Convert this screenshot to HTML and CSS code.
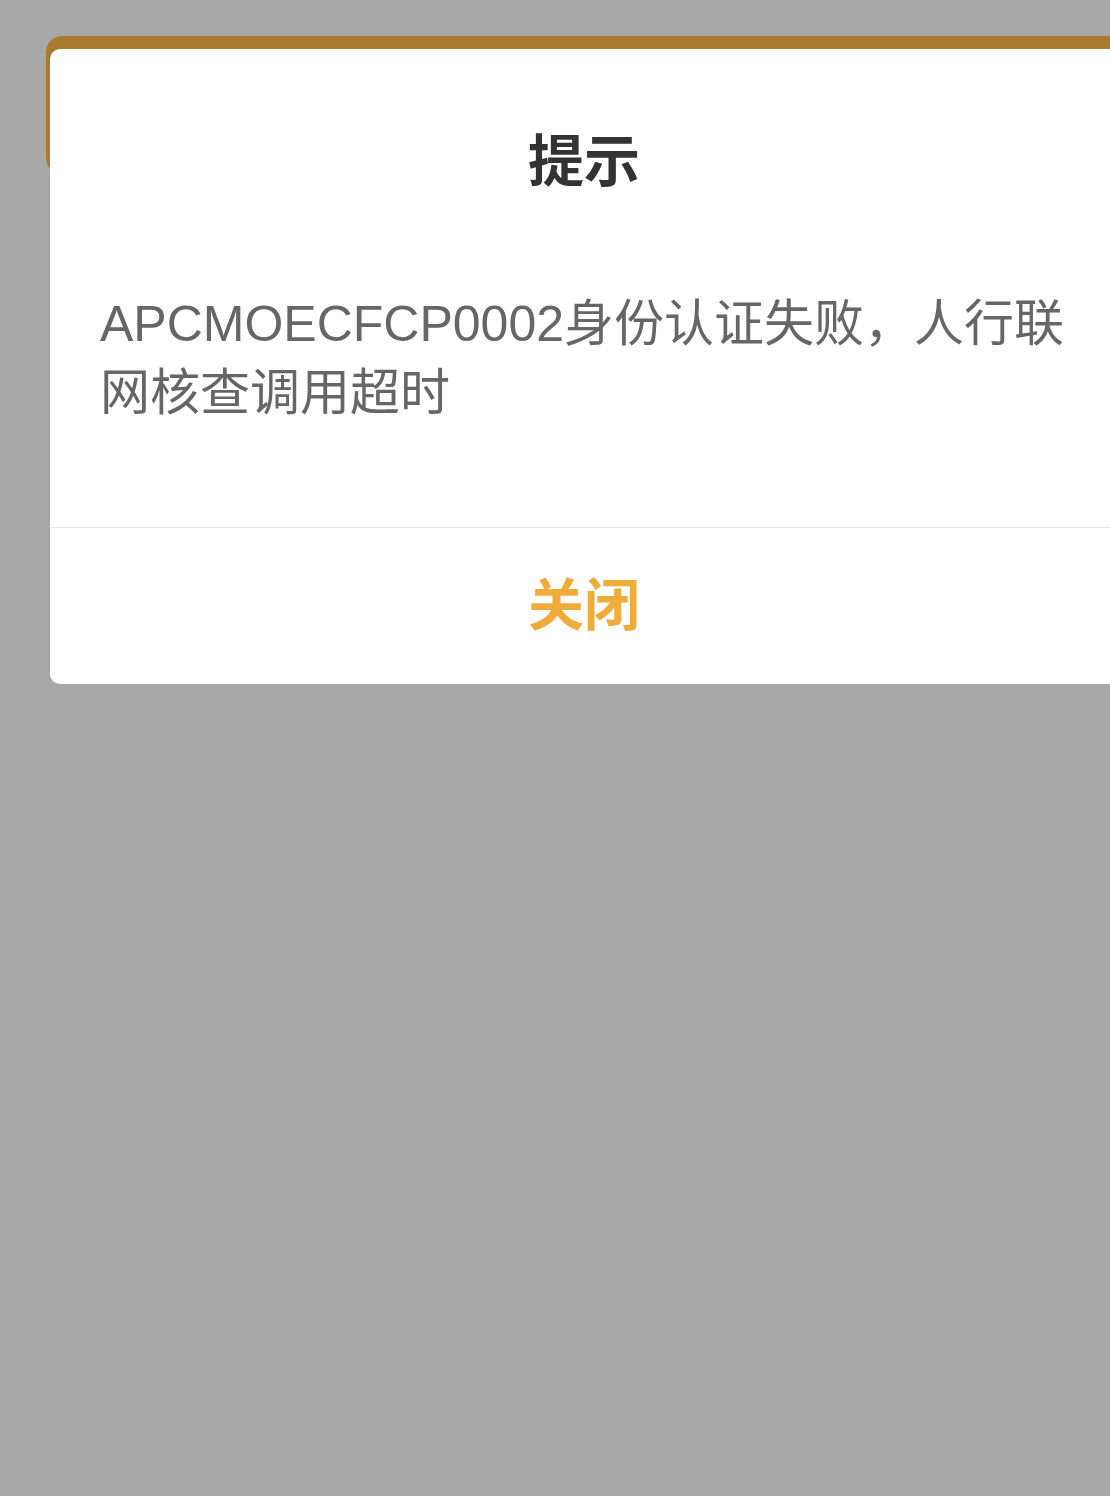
FILE: index.html
```html
<!DOCTYPE html>
<html lang="zh-CN">
<head>
<meta charset="utf-8">
<title>提示</title>
<link rel="stylesheet" href="styles.css">
</head>
<body>
<div class="page">
  <div class="gold-card"></div>
</div>
<div class="mask">
  <div class="dialog">
    <div class="dialog-title">提示</div>
    <div class="dialog-msg">APCMOECFCP0002身份认证失败，人行联网核查调用超时</div>
    <div class="dialog-footer">
      <div class="dialog-btn">关闭</div>
    </div>
  </div>
</div>
</body>
</html>
```
FILE: styles.css
```css
html, body {
  margin: 0;
  padding: 0;
}
body {
  width: 1110px;
  height: 1496px;
  overflow: hidden;
  background: #a8a8a8;
  font-family: "Liberation Sans", "Noto Sans CJK SC", sans-serif;
  position: relative;
}
.page {
  padding: 36px 0 0 46px;
}
.gold-card {
  width: 1100px;
  height: 138px;
  background: #a97b2c;
  border-radius: 16px;
}
.mask {
  position: absolute;
  left: 0;
  top: 0;
  right: 0;
  bottom: 0;
}
.dialog {
  position: absolute;
  left: 50px;
  top: 49px;
  width: 1068px;
  background: #ffffff;
  border-radius: 10px;
}
.dialog-title {
  padding-top: 80px;
  font-size: 56px;
  line-height: 56px;
  height: 56px;
  font-weight: bold;
  color: #333333;
  text-align: center;
  font-family: "Noto Sans CJK SC", sans-serif;
}
.dialog-msg {
  padding: 105px 50px 99px 50px;
  font-size: 50px;
  line-height: 69px;
  color: #666666;
}
.dialog-footer {
  box-sizing: border-box;
  border-top: 1px solid #e6e6e6;
  height: 157px;
  padding-bottom: 10px;
  display: flex;
  align-items: center;
  justify-content: center;
}
.dialog-btn {
  font-family: "Noto Sans CJK SC", sans-serif;
  font-size: 56px;
  font-weight: bold;
  color: #f0ac3a;
  line-height: 56px;
}
```
